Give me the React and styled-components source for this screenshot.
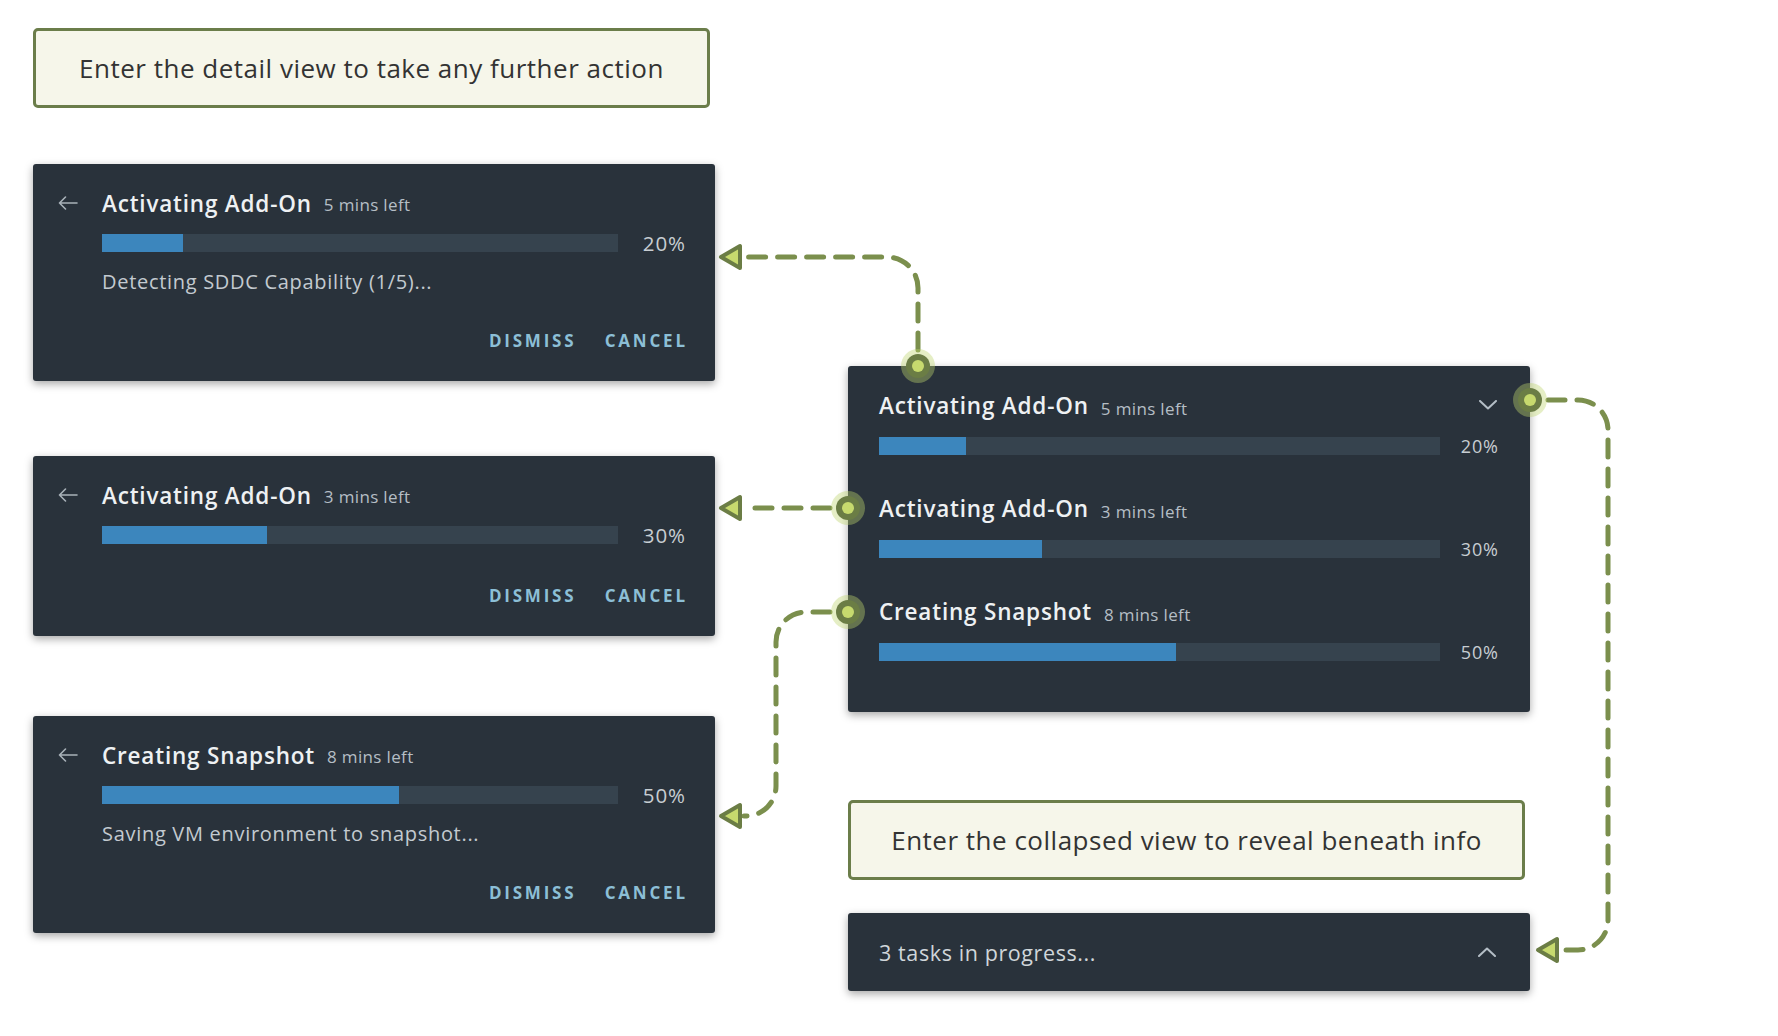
import styled, { createGlobalStyle } from "styled-components";

const GlobalStyle = createGlobalStyle`
  html, body {
    margin: 0;
    padding: 0;
    background: #ffffff;
  }
  body {
    font-family: "Open Sans", Lato, sans-serif;
  }
`;

const Canvas = styled.div`
  position: relative;
  width: 1778px;
  height: 1036px;
  box-sizing: border-box;
  padding: 28px 0 0 33px;
  display: grid;
  grid-template-columns: 682px 682px;
  column-gap: 133px;
  align-items: start;
  overflow: hidden;
`;

const Column = styled.div`
  display: flex;
  flex-direction: column;
`;

const Callout = styled.div`
  width: 677px;
  height: 80px;
  box-sizing: border-box;
  margin-top: ${(p) => p.$mt || 0}px;
  border: 3px solid #6b7d4a;
  border-radius: 5px;
  background: #f6f6ea;
  display: flex;
  align-items: center;
  justify-content: center;
  font-size: 26px;
  letter-spacing: 0.5px;
  color: #333;
`;

const Card = styled.div`
  margin-top: ${(p) => p.$mt || 0}px;
  background: #29323b;
  border-radius: 3px;
  box-shadow: 0 3px 8px rgba(0, 0, 0, 0.35);
  padding: 26px 30px 31px 25px;
  display: flex;
  flex-direction: column;
`;

const Header = styled.div`
  display: flex;
  align-items: center;
  height: 26px;
`;

const BackIcon = styled.svg`
  width: 20px;
  height: 14px;
  margin-right: 24px;
  flex: none;
`;

const Title = styled.span`
  font-size: 22.5px;
  font-weight: 600;
  letter-spacing: 0.8px;
  color: #eef1f3;
  white-space: nowrap;
`;

const Meta = styled.span`
  font-size: 17px;
  letter-spacing: 0.35px;
  color: #b5bec5;
  margin-left: 12px;
  position: relative;
  top: 1px;
`;

const Body = styled.div`
  margin-left: ${(p) => p.$indent || 0}px;
  display: flex;
  flex-direction: column;
`;

const BarRow = styled.div`
  display: flex;
  align-items: center;
  margin-top: ${(p) => p.$mt || 18}px;
  height: 18px;
  gap: ${(p) => p.$gap || 22}px;
`;

const Track = styled.div`
  flex: 1;
  height: 18px;
  background: #36434e;
`;

const Fill = styled.div`
  height: 100%;
  background: #3c86bd;
`;

const Percent = styled.span`
  width: ${(p) => p.$w}px;
  line-height: 18px;
  text-align: right;
  font-size: ${(p) => p.$size}px;
  letter-spacing: 0.9px;
  margin-right: -0.9px;
  color: #c7cdd2;
  flex: none;
`;

const Desc = styled.div`
  margin-top: 19px;
  line-height: 22px;
  font-size: 20px;
  letter-spacing: 0.7px;
  color: #c3cad0;
`;

const Actions = styled.div`
  margin-top: ${(p) => p.$mt}px;
  display: flex;
  justify-content: flex-end;
  gap: 31px;
  height: 20px;
  align-items: center;
`;

const ActionButton = styled.button`
  background: none;
  border: none;
  padding: 0;
  font-family: inherit;
  font-size: 17px;
  font-weight: 700;
  letter-spacing: 2.8px;
  margin-right: -2.8px;
  color: #8cbfd6;
  cursor: pointer;
`;

const Panel = styled.div`
  margin-top: ${(p) => p.$mt || 0}px;
  background: #29323b;
  border-radius: 3px;
  box-shadow: 0 3px 8px rgba(0, 0, 0, 0.35);
  padding: 26px 32px 51px 31px;
  display: flex;
  flex-direction: column;
`;

const PanelRow = styled.div`
  display: flex;
  flex-direction: column;
  margin-top: ${(p) => (p.$first ? 0 : 40)}px;
`;

const PanelHeader = styled.div`
  display: flex;
  align-items: center;
  justify-content: space-between;
  height: 26px;
`;

const Chevron = styled.svg`
  width: 18px;
  height: 10px;
  flex: none;
  margin-right: 1px;
`;

const Collapsed = styled.div`
  margin-top: ${(p) => p.$mt || 0}px;
  height: 78px;
  box-sizing: border-box;
  background: #29323b;
  border-radius: 3px;
  box-shadow: 0 3px 8px rgba(0, 0, 0, 0.35);
  padding: 0 33px 0 31px;
  display: flex;
  align-items: center;
  justify-content: space-between;
  font-size: 21.5px;
  letter-spacing: 0.6px;
  color: #d0d6da;
`;

const Overlay = styled.svg`
  position: absolute;
  left: 0;
  top: 0;
  width: 1778px;
  height: 1036px;
  pointer-events: none;
`;

const GREEN = "#7b8f4d";
const DARK = "#6b7d45";
const LIGHT = "#c7da6e";

const Arrow = ({ x, y }) => (
  <polygon
    points={`${x},${y} ${x + 19},${y - 11} ${x + 19},${y + 11}`}
    fill={LIGHT}
    stroke={DARK}
    strokeWidth="4"
    strokeLinejoin="round"
  />
);

const Dot = ({ x, y }) => (
  <g>
    <circle cx={x} cy={y} r="17" fill="rgba(190, 212, 110, 0.4)" />
    <circle cx={x} cy={y} r="12" fill={DARK} />
    <circle cx={x} cy={y} r="6" fill={LIGHT} />
  </g>
);

const Connectors = () => (
  <Overlay viewBox="0 0 1778 1036">
    <g fill="none" stroke={GREEN} strokeWidth="5" strokeLinecap="round" strokeDasharray="17 12">
      <path d="M918 350 L918 288 A31 31 0 0 0 887 257 L744 257" />
      <path d="M830 508 L744 508" />
      <path d="M830 612 L806 612 A30 30 0 0 0 776 642 L776 786 A30 30 0 0 1 746 816 L744 816" />
      <path d="M1548 400 L1578 400 A30 30 0 0 1 1608 430 L1608 920 A30 30 0 0 1 1578 950 L1562 950" />
    </g>
    <Arrow x={721} y={257} />
    <Arrow x={721} y={508} />
    <Arrow x={721} y={816} />
    <Arrow x={1538} y={950} />
    <Dot x={918} y={366} />
    <Dot x={848} y={508} />
    <Dot x={848} y={612} />
    <Dot x={1530} y={400} />
  </Overlay>
);

const Back = () => (
  <BackIcon viewBox="0 0 20 14">
    <path d="M19 7 H1.5 M7.5 1 L1.5 7 L7.5 13" fill="none" stroke="#a9b2b9" strokeWidth="1.6" strokeLinecap="round" strokeLinejoin="round" />
  </BackIcon>
);

const ChevronIcon = ({ up }) => (
  <Chevron viewBox="0 0 18 10">
    <path
      d={up ? "M1 9 L9 1.5 L17 9" : "M1 1 L9 8.5 L17 1"}
      fill="none"
      stroke="#b4bec6"
      strokeWidth="2"
      strokeLinecap="round"
      strokeLinejoin="round"
    />
  </Chevron>
);

const tasks = [
  { title: "Activating Add-On", left: "5 mins left", pct: "20%", fill: 15.7, desc: "Detecting SDDC Capability (1/5)...", mt: 56 },
  { title: "Activating Add-On", left: "3 mins left", pct: "30%", fill: 32, desc: null, mt: 75 },
  { title: "Creating Snapshot", left: "8 mins left", pct: "50%", fill: 57.5, desc: "Saving VM environment to snapshot...", mt: 80 },
];

const panelTasks = [
  { title: "Activating Add-On", left: "5 mins left", pct: "20%", fill: 15.5 },
  { title: "Activating Add-On", left: "3 mins left", pct: "30%", fill: 29 },
  { title: "Creating Snapshot", left: "8 mins left", pct: "50%", fill: 53 },
];

const TaskCard = ({ task }) => (
  <Card $mt={task.mt}>
    <Header>
      <Back />
      <Title>{task.title}</Title>
      <Meta>{task.left}</Meta>
    </Header>
    <Body $indent={44}>
      <BarRow>
        <Track>
          <Fill style={{ width: `${task.fill}%` }} />
        </Track>
        <Percent $w={46} $size={20.5}>{task.pct}</Percent>
      </BarRow>
      {task.desc && <Desc>{task.desc}</Desc>}
      <Actions $mt={task.desc ? 37 : 41}>
        <ActionButton>DISMISS</ActionButton>
        <ActionButton>CANCEL</ActionButton>
      </Actions>
    </Body>
  </Card>
);

const App = () => {
  return (
    <>
      <GlobalStyle />
      <Canvas>
        <Column>
          <Callout>Enter the detail view to take any further action</Callout>
          {tasks.map((t, i) => (
            <TaskCard key={i} task={t} />
          ))}
        </Column>
        <Column>
          <Panel $mt={338}>
            {panelTasks.map((t, i) => (
              <PanelRow key={i} $first={i === 0}>
                <PanelHeader>
                  <div>
                    <Title>{t.title}</Title>
                    <Meta>{t.left}</Meta>
                  </div>
                  {i === 0 && <ChevronIcon />}
                </PanelHeader>
                <BarRow $mt={19} $gap={20}>
                  <Track>
                    <Fill style={{ width: `${t.fill}%` }} />
                  </Track>
                  <Percent $w={39} $size={18}>{t.pct}</Percent>
                </BarRow>
              </PanelRow>
            ))}
          </Panel>
          <Callout $mt={88}>Enter the collapsed view to reveal beneath info</Callout>
          <Collapsed $mt={33}>
            <span>3 tasks in progress...</span>
            <ChevronIcon up />
          </Collapsed>
        </Column>
        <Connectors />
      </Canvas>
    </>
  );
};

export default App;
